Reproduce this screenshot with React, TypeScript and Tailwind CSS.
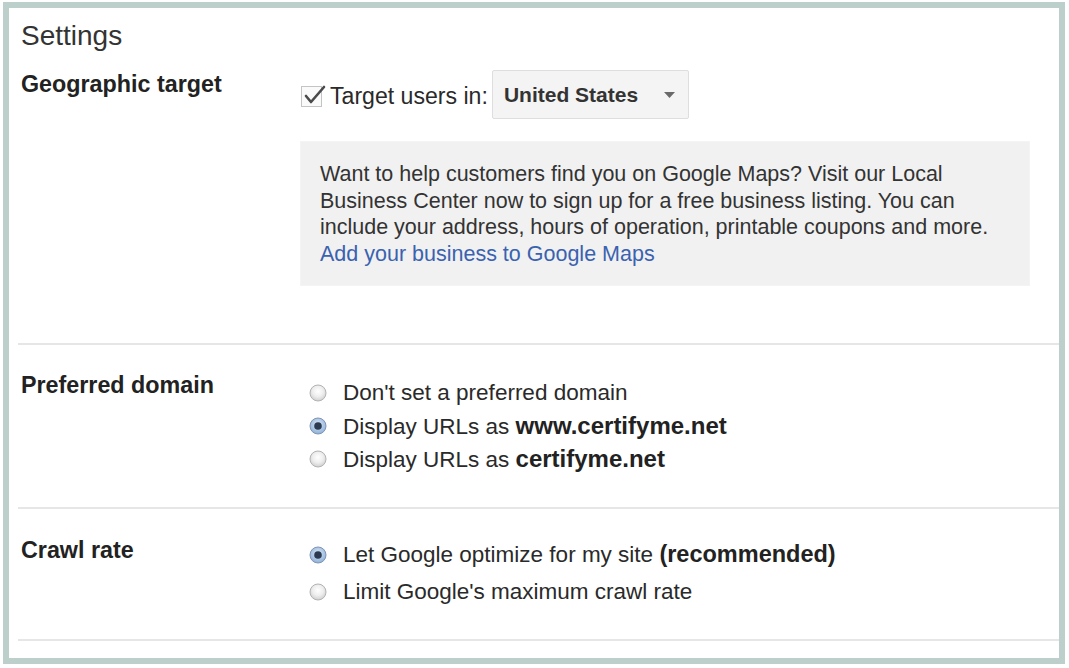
import React from "react";

const font = { fontFamily: '"Liberation Sans", Arial, sans-serif' };

function Radio({ checked }: { checked?: boolean }) {
  return (
    <svg width="18" height="18" viewBox="0 0 18 18" className="shrink-0">
      <defs>
        <radialGradient id="ru" cx="50%" cy="40%" r="60%">
          <stop offset="0%" stopColor="#ffffff" />
          <stop offset="55%" stopColor="#eeeeee" />
          <stop offset="100%" stopColor="#cfcfcf" />
        </radialGradient>
        <radialGradient id="rc" cx="50%" cy="40%" r="60%">
          <stop offset="0%" stopColor="#dbe8f7" />
          <stop offset="100%" stopColor="#8fb0d8" />
        </radialGradient>
      </defs>
      {checked ? (
        <>
          <circle cx="9" cy="9" r="8" fill="url(#rc)" stroke="#7d95b6" strokeWidth="1" />
          <circle cx="9" cy="9" r="3.8" fill="#2b3a4f" />
        </>
      ) : (
        <circle cx="9" cy="9" r="8" fill="url(#ru)" stroke="#b3b3b3" strokeWidth="1" />
      )}
    </svg>
  );
}

function RadioRow({ checked, children, h }: { checked?: boolean; children: React.ReactNode; h: string }) {
  return (
    <div className={`flex items-center ${h}`}>
      <div className="ml-[9px] mr-[16px] flex items-center">
        <Radio checked={checked} />
      </div>
      <span className="text-[22.5px] text-[#2a2a2a]">{children}</span>
    </div>
  );
}

export default function App() {
  return (
    <div className="w-[1069px] h-[668px] bg-white pt-[2px] pl-[3px]" style={font}>
      <div className="w-[1062px] h-[662px] border-[6px] border-[#bccfcb] bg-white flex flex-col overflow-hidden">
        <div className="pl-[12px] mt-[12px] text-[28px] leading-[32px] text-[#333]">Settings</div>

        {/* Geographic target */}
        <div className="flex pl-[12px] mt-[18px] pb-[57px]">
          <div className="w-[279px] text-[23.3px] leading-[28px] font-bold text-[#222]">Geographic target</div>
          <div className="flex flex-col">
            <div className="flex items-center h-[49px]">
              <div className="relative w-[21px] h-[21px] border border-[#c4c4c4] bg-[#fafafa] ml-[1px] mt-[3px]">
                <svg className="absolute left-[1px] top-[-4px]" width="24" height="24" viewBox="0 0 24 24">
                  <path d="M3 13 L8 19 L21 4" fill="none" stroke="#4a4a4a" strokeWidth="2.6" strokeLinecap="round" strokeLinejoin="round" />
                </svg>
              </div>
              <span className="ml-[8px] text-[23.1px] text-[#2a2a2a] mt-[3px]">Target users in:</span>
              <div className="ml-[4px] w-[197px] h-[49px] bg-[#f4f4f4] border border-[#dedede] rounded-[2px] flex items-center justify-between pl-[11px] pr-[13px]">
                <span className="text-[21px] font-bold text-[#333]">United States</span>
                <svg width="11" height="6" viewBox="0 0 11 6">
                  <path d="M0 0 H11 L5.5 6 Z" fill="#6a6a6a" />
                </svg>
              </div>
            </div>
            <div className="mt-[22px] w-[730px] h-[145px] bg-[#f1f1f1] border border-[#f4f4f4] pl-[19px] pt-[19px] text-[21.5px] leading-[26.5px] text-[#333]">
              <p>
                Want to help customers find you on Google Maps? Visit our Local
                <br />
                Business Center now to sign up for a free business listing. You can
                <br />
                include your address, hours of operation, printable coupons and more.
              </p>
              <p className="text-[#3a62b0]">Add your business to Google Maps</p>
            </div>
          </div>
        </div>

        <div className="ml-[9px] h-[2px] bg-[#e6e6e6]" />

        {/* Preferred domain */}
        <div className="flex pl-[12px] pt-[26px] pb-[32px]">
          <div className="w-[279px] text-[23.3px] leading-[28px] font-bold text-[#222]">Preferred domain</div>
          <div className="flex flex-col mt-[5px]">
            <RadioRow h="h-[33px]">Don't set a preferred domain</RadioRow>
            <RadioRow h="h-[33px]" checked>
              Display URLs as <b className="text-[24px] text-[#222]">www.certifyme.net</b>
            </RadioRow>
            <RadioRow h="h-[33px]">
              Display URLs as <b className="text-[24px] text-[#222]">certifyme.net</b>
            </RadioRow>
          </div>
        </div>

        <div className="ml-[9px] h-[2px] bg-[#e6e6e6]" />

        {/* Crawl rate */}
        <div className="flex pl-[12px] pt-[27px] pb-[29px]">
          <div className="w-[279px] text-[23.3px] leading-[28px] font-bold text-[#222]">Crawl rate</div>
          <div className="flex flex-col">
            <RadioRow h="h-[37px]" checked>
              Let Google optimize for my site <b className="text-[23.5px] text-[#222]">(recommended)</b>
            </RadioRow>
            <RadioRow h="h-[37px]">Limit Google's maximum crawl rate</RadioRow>
          </div>
        </div>

        <div className="ml-[9px] h-[2px] bg-[#e6e6e6]" />
      </div>
    </div>
  );
}
